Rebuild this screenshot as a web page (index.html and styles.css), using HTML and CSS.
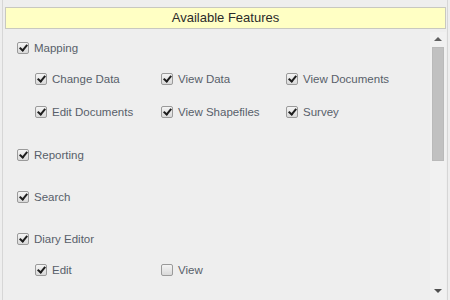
FILE: index.html
```html
<!DOCTYPE html>
<html>
<head>
<meta charset="utf-8">
<link rel="stylesheet" href="styles.css">
</head>
<body>
<div class="panel">
  <div class="title">Available Features</div>
  <div class="body">
    <div class="list">
      <div class="group">
        <label class="item"><span class="cb on"></span>Mapping</label>
        <div class="subs">
          <label class="item"><span class="cb on"></span>Change Data</label>
          <label class="item"><span class="cb on"></span>View Data</label>
          <label class="item"><span class="cb on"></span>View Documents</label>
          <label class="item"><span class="cb on"></span>Edit Documents</label>
          <label class="item"><span class="cb on"></span>View Shapefiles</label>
          <label class="item"><span class="cb on"></span>Survey</label>
        </div>
      </div>
      <div class="group">
        <label class="item"><span class="cb on"></span>Reporting</label>
      </div>
      <div class="group">
        <label class="item"><span class="cb on"></span>Search</label>
      </div>
      <div class="group">
        <label class="item"><span class="cb on"></span>Diary Editor</label>
        <div class="subs">
          <label class="item"><span class="cb on"></span>Edit</label>
          <label class="item"><span class="cb"></span>View</label>
        </div>
      </div>
    </div>
    <div class="scrollbar">
      <div class="btn"><span class="arrow up"></span></div>
      <div class="thumb"></div>
      <div class="rest"></div>
      <div class="btn"><span class="arrow down"></span></div>
    </div>
  </div>
</div>
</body>
</html>
```
FILE: styles.css
```css
html, body {
  margin: 0;
  padding: 0;
  background: #eeeeee;
}
body {
  font-family: "Liberation Sans", Arial, sans-serif;
}
.panel {
  box-sizing: border-box;
  width: 446px;
  height: 300px;
  margin-left: 2px;
  border-left: 1px solid #d6d6d6;
  border-right: 1px solid #d6d6d6;
  background: #eeeeee;
  overflow: hidden;
}
.title {
  margin: 7px 1px 0 2px;
  height: 20px;
  line-height: 20px;
  border: 1px solid #c8c8c0;
  background: #ffffc4;
  color: #2b2b2b;
  font-size: 13px;
  text-align: center;
}
.body {
  display: flex;
  margin-top: 3px;
  height: 268px;
}
.list {
  flex: 1;
  padding: 6px 0 0 14px;
}
.group {
  margin-bottom: 22px;
}
.group:first-child {
  margin-bottom: 23px;
}
.item {
  display: flex;
  align-items: center;
  gap: 5px;
  height: 20px;
  font-size: 11.5px;
  color: #585f6a;
}
.subs {
  display: grid;
  grid-template-columns: 126px 125px auto;
  row-gap: 13px;
  padding: 11px 0 0 18px;
}
.cb {
  position: relative;
  box-sizing: border-box;
  width: 12px;
  height: 12px;
  border: 1px solid #9a9a9a;
  border-radius: 2px;
  background: linear-gradient(#f4f4f4, #d9d9d9);
  flex: none;
}
.cb.on::after {
  content: "";
  position: absolute;
  left: 3px;
  top: 0px;
  width: 3px;
  height: 6px;
  border-right: 2px solid #1e1e1e;
  border-bottom: 2px solid #1e1e1e;
  transform: rotate(40deg);
}
.scrollbar {
  width: 16px;
  margin-right: 1px;
  display: flex;
  flex-direction: column;
  align-items: center;
  background: #f1f1f1;
}
.btn {
  height: 14px;
  width: 16px;
  display: flex;
  align-items: center;
  justify-content: center;
  flex: none;
}
.btn:last-child {
  margin-bottom: 2px;
}
.arrow {
  width: 0;
  height: 0;
  border-left: 4px solid transparent;
  border-right: 4px solid transparent;
}
.arrow.up {
  border-bottom: 4px solid #606060;
}
.arrow.down {
  border-top: 4px solid #505050;
}
.thumb {
  box-sizing: border-box;
  width: 12px;
  height: 114px;
  margin-top: 1px;
  background: #c1c1c1;
  border: 1px solid #bababa;
  flex: none;
}
.rest {
  flex: 1;
}
```
